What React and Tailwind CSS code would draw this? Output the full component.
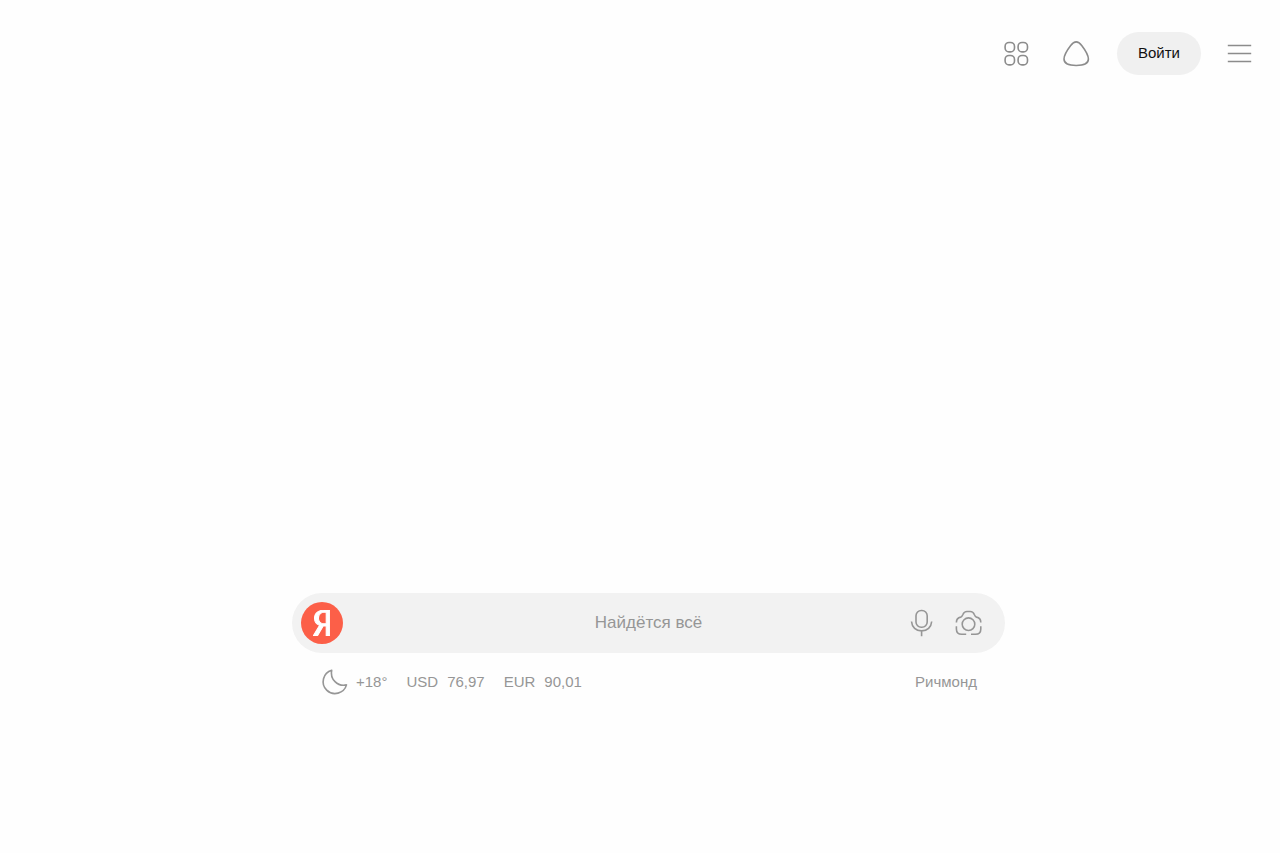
import { useState } from 'react';
import { FaYandex } from 'react-icons/fa';

function Icon({ children }) {
  return (
    <svg
      viewBox="0 0 28 28"
      fill="none"
      stroke="currentColor"
      strokeWidth="1.6"
      className="h-7 w-7 shrink-0"
      aria-hidden="true"
    >
      {children}
    </svg>
  );
}

function ServicesIcon() {
  return (
    <Icon>
      <rect x="3.1" y="2.5" width="9.4" height="9.4" rx="3.9" />
      <rect x="16.1" y="2.5" width="9.4" height="9.4" rx="3.9" />
      <rect x="3.1" y="15.5" width="9.4" height="9.4" rx="3.9" />
      <rect x="16.1" y="15.5" width="9.4" height="9.4" rx="3.9" />
    </Icon>
  );
}

function AliceIcon() {
  return (
    <Icon>
      <path d="M14.2 1.9c1.9 0 3.5 1 5.5 3.6 3.1 4 6.7 9.8 6.7 13.6 0 4.3-4.5 6.4-12.2 6.4S2 23.4 2 19.1c0-3.8 3.6-9.6 6.7-13.6 2-2.6 3.6-3.6 5.5-3.6Z" />
    </Icon>
  );
}

function MenuIcon() {
  return (
    <Icon>
      <path d="M2.8 5.5h23.4M2.8 13.5h23.4M2.8 21.5h23.4" />
    </Icon>
  );
}

function MicIcon() {
  return (
    <Icon>
      <rect x="8" y="1.5" width="11.2" height="16.8" rx="5.3" />
      <path d="M3.5 12.5c.4 5.6 4.5 9.4 10.1 9.4s9.7-3.8 10.1-9.4M13.6 21.9v5.4" />
    </Icon>
  );
}

function CameraIcon() {
  return (
    <Icon>
      <circle cx="13.5" cy="15.2" r="6.3" />
      <path d="M1.4 13.5c0-2.8 1.4-4.9 4.3-5.4 1.2-.3 1.5-.9 2.2-2.6.8-2.1 2-3 4.1-3h3.2c2.1 0 3.3.9 4.1 3 .7 1.7 1 2.300 2.2 2.600 2.9.5 4.300 2.600 4.300 5.400" />
      <path d="M1.4 17.3V20c0 3.5 1.8 5.3 5.3 5.3h4.500M25.800 17.300V20c0 3.500-1.800 5.300-5.300 5.300H16" />
    </Icon>
  );
}

function MoonIcon() {
  return (
    <Icon>
      <path d="M11.7 2.200A11.900 11.900 0 1 0 26.500 16.900 12.300 12.300 0 0 1 11.700 2.200Z" strokeLinejoin="round" />
    </Icon>
  );
}

function Header() {
  return (
    <header className="flex items-center justify-end pt-8 pr-[27px] text-[#8c8c8c]">
      <button type="button" aria-label="Сервисы" className="mr-8 cursor-pointer">
        <ServicesIcon />
      </button>
      <button type="button" aria-label="Алиса" className="mr-[27px] cursor-pointer">
        <AliceIcon />
      </button>
      <button
        type="button"
        className="mr-6 h-[43px] cursor-pointer rounded-full bg-[#f0f0f0] px-[21px] text-[15px] text-[#111111]"
      >
        Войти
      </button>
      <button type="button" aria-label="Меню" className="cursor-pointer">
        <MenuIcon />
      </button>
    </header>
  );
}

function SearchBar() {
  const [query, setQuery] = useState('');

  return (
    <form
      role="search"
      onSubmit={(e) => e.preventDefault()}
      className="flex h-[60px] items-center rounded-full bg-[#f2f2f2] text-[#969696]"
    >
      <div className="w-24 shrink-0 pl-[9px]">
        <a
          href="#"
          aria-label="Яндекс"
          className="flex h-[42px] w-[42px] items-center justify-center rounded-full bg-[#fc5f48] pr-[2px] text-white"
        >
          <FaYandex
            preserveAspectRatio="none"
            stroke="currentColor"
            strokeWidth="16"
            className="h-[26px] w-[17px]"
          />
        </a>
      </div>
      <input
        type="text"
        value={query}
        onChange={(e) => setQuery(e.target.value)}
        placeholder="Найдётся всё"
        aria-label="Запрос"
        className="h-full min-w-0 flex-1 bg-transparent text-center text-[17px] text-black outline-none placeholder:text-[#969696]"
      />
      <div className="flex w-24 shrink-0 justify-end gap-[19px] pr-[22px]">
        <button type="button" aria-label="Голосовой поиск" className="cursor-pointer">
          <MicIcon />
        </button>
        <button type="button" aria-label="Поиск по картинке" className="cursor-pointer">
          <CameraIcon />
        </button>
      </div>
    </form>
  );
}

const rates = [
  { code: 'USD', value: '76,97' },
  { code: 'EUR', value: '90,01' },
];

function Informers() {
  return (
    <div className="mt-[15px] flex items-center gap-[19px] px-7 text-[15px] text-[#969696]">
      <a href="#" className="flex items-center gap-2">
        <MoonIcon />
        +18°
      </a>
      {rates.map((rate) => (
        <a key={rate.code} href="#" className="flex gap-[9px]">
          <span>{rate.code}</span>
          <span>{rate.value}</span>
        </a>
      ))}
      <a href="#" className="ml-auto">
        Ричмонд
      </a>
    </div>
  );
}

export default function App() {
  return (
    <div className="flex min-h-screen flex-col bg-[#fefefe] font-['Liberation_Sans',Arial,sans-serif]">
      <Header />
      <main className="mt-auto pb-[157px] pl-[17px]">
        <div className="mx-auto w-full max-w-[713px]">
          <SearchBar />
          <Informers />
        </div>
      </main>
    </div>
  );
}
